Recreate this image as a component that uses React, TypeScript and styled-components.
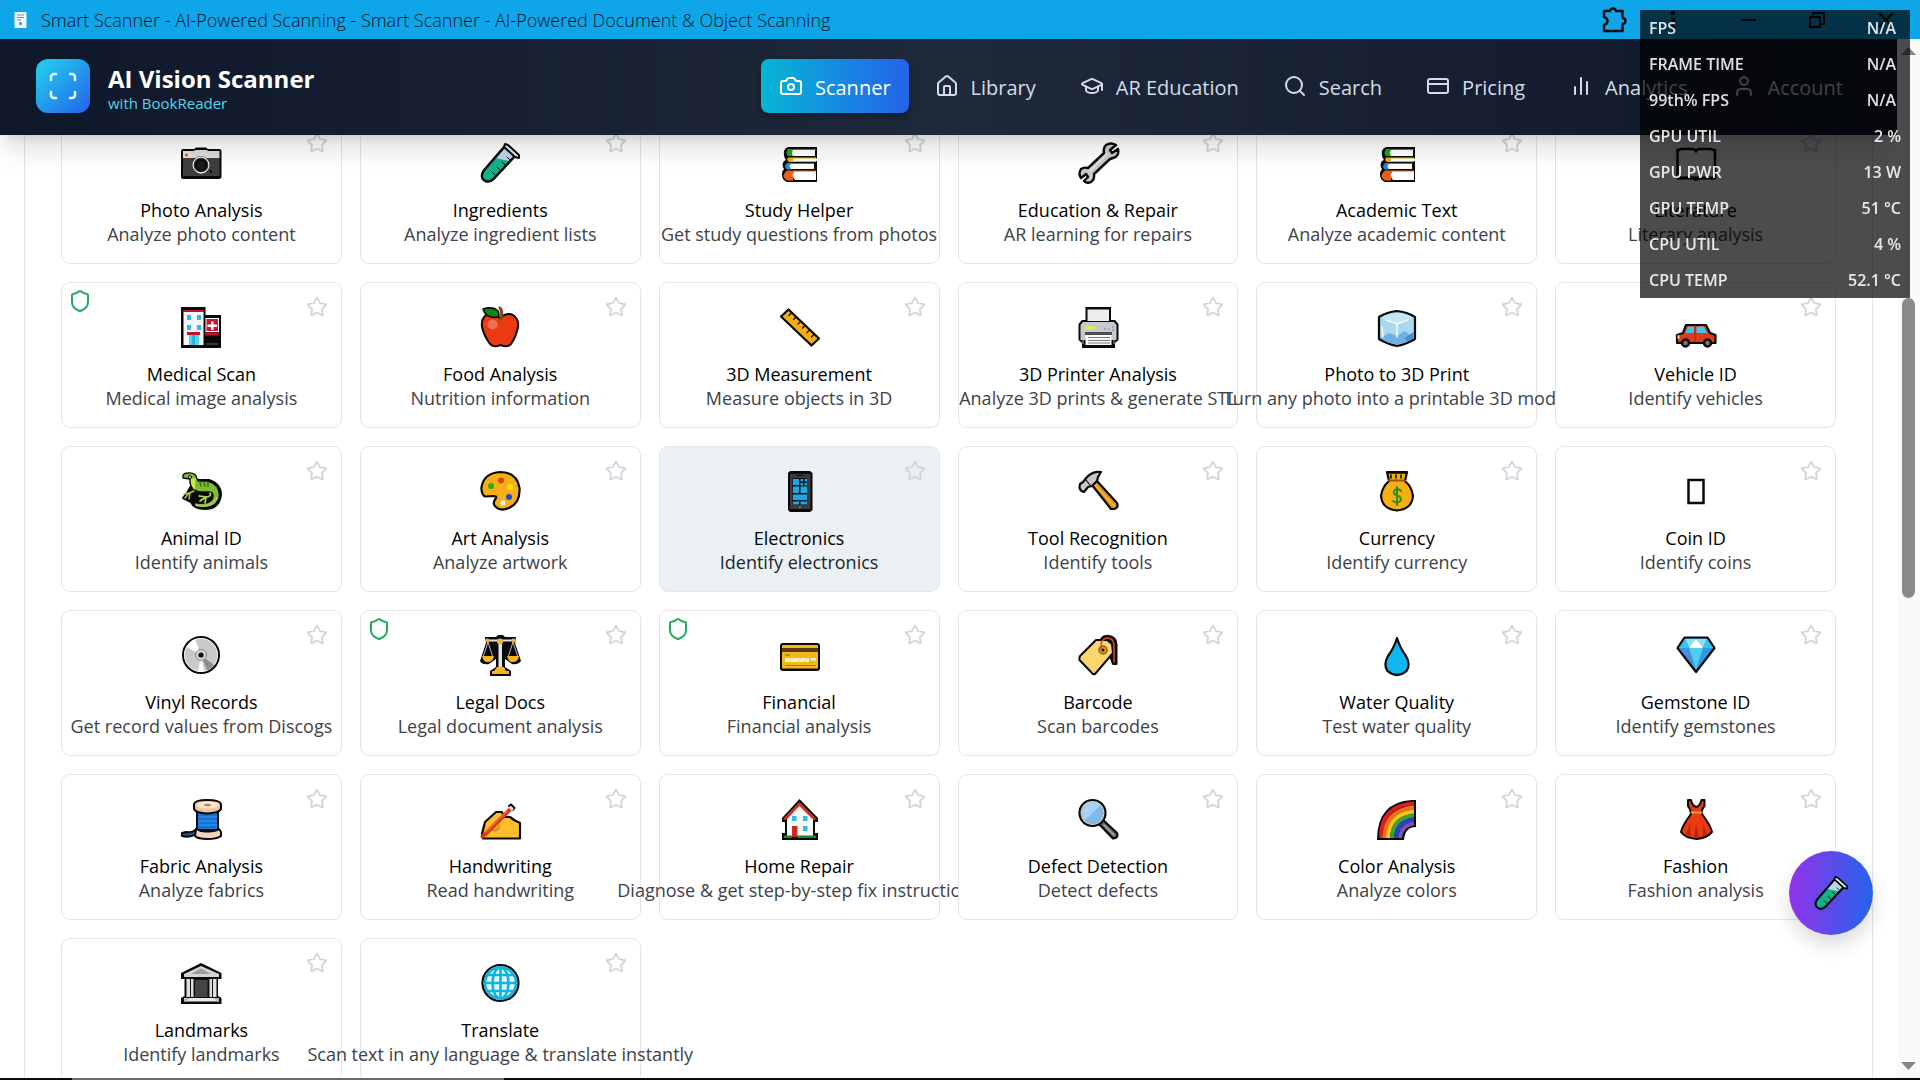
import React from 'react';
import styled, { createGlobalStyle } from 'styled-components';
import { Camera, House, GraduationCap, Search, CreditCard, User, Star, Shield } from 'lucide-react';

const Global = createGlobalStyle`
  *, *::before, *::after { box-sizing: border-box; }
  body { margin: 0; background: #fff; font-family: 'Segoe UI', 'Open Sans', 'Noto Sans', sans-serif; font-size: 18px; color: #000; }
  button { font: inherit; color: inherit; background: none; border: 0; padding: 0; cursor: pointer; }
  h1, p, h2, dl, dt, dd { margin: 0; }
`;

/* ---------- pictograms ---------- */

const K = { stroke: '#0a0a0a', strokeWidth: 2, strokeLinejoin: 'round', strokeLinecap: 'round' } as const;

const TestTube = () => (
  <g {...K}>
    <path d="M25 4 L3.500 29 Q0 35 4 38 Q8 41.500 13.500 37 L35 14 Z" fill="#b9d8e8" />
    <path d="M15 16 L3.500 29 Q0 35 4 38 Q8 41.500 13.500 37 L29 19 Z" fill="#0fb38a" stroke="none" />
    <path d="M25 4 L3.500 29 Q0 35 4 38 Q8 41.500 13.500 37 L35 14" fill="none" strokeWidth="2.400" />
    <path d="M25 2 L28 3 L39 13 L39 16 L35 15 L24 5 Z" fill="#d4ebf5" />
    <path d="M27 15 l3 3 M22 20 l3 3 M17 25 l3 3 M12 30 l3 3" strokeWidth="1" />
  </g>
);

const Books = () => (
  <g>
    <path d="M9 5 H38 V40 H8 Q3 38 3 33 Q3 29 5 27 Q2 23 5 19 L7 18 Q4 14 5 9 Q6 6 9 5Z" fill="#0a0a0a" />
    <path d="M9 7 H37 V8 H14 V14 H9 Q6 11 9 7Z" fill="#1fa51b" />
    <path d="M14 8 H36 V14 H14 Q12 11 14 8Z" fill="#fff" />
    <path d="M9 15.500 H37 V20 H10 Q7 18 9 15.500Z" fill="#e9b50f" />
    <path d="M14 16.500 H38 V19 H14Z" fill="#fff" />
    <path d="M8 21 H35 V22 H12 V27.500 H8 Q4 25 8 21Z" fill="#2f83d6" />
    <path d="M12 22 H35 V27 H12 Q9 24 12 22Z" fill="#fff" />
    <path d="M8 28.500 H37 V30 H14 V38.500 H8 Q1 34 8 28.500Z" fill="#ee5f16" />
    <path d="M15 29.500 H37 V38 H16 Q12 34 15 29.500Z" fill="#fff" />
  </g>
);

const pictures: Record<string, React.ReactNode> = {
  camera: (
    <g>
      <path d="M2 7 H13 L15 5.500 H25 L27 7 H38 Q40.500 7 40.500 9 V35 Q40.500 37 38 37 H2 Q0 37 0 35 V9 Q0 7 2 7Z" fill="#0a0a0a" />
      <rect x="2" y="16" width="36.500" height="18" fill="#3e3e3e" />
      <path d="M2 9 H12 L15 8 H25 L28 9 H38.500 V16 H2Z" fill="#dcdcdc" />
      <path d="M2 9 h9 v7 h-9z" fill="#f3dcd6" />
      <circle cx="5.500" cy="13" r="1.500" fill="#e04a20" />
      <circle cx="20" cy="23" r="9" fill="#0a0a0a" />
      <circle cx="20" cy="23" r="8" fill="#2a2a2a" stroke="#f2f2f2" strokeWidth="1.300" />
      <circle cx="20" cy="23" r="5" fill="#1c1c1c" stroke="#0a0a0a" strokeWidth="2" />
      <rect x="29" y="28" width="2" height="3" fill="#111" />
    </g>
  ),
  tube: <TestTube />,
  books: <Books />,
  wrench: (
    <g {...K}>
      <path
        d="M28 3 Q33 0 38 3 L32 8 L34 11 L40 7 Q42 14 35 16 L32 17 L16 32 Q17 37 13 40 Q9 42 6 39 L10 35 L8 32 L3 36 Q0 32 3 27 Q6 25 10 26 L26 11 Q25 6 28 3Z"
        fill="#c9c9c9"
        strokeWidth="2.400"
      />
      <path d="M12 29 L29 12" stroke="#e8e8e8" strokeWidth="1.500" />
    </g>
  ),
  openbook: (
    <g fill="#fff" stroke="#0a0a0a" strokeWidth="2.500">
      <path d="M1.500 8 H3 Q4 7 6 7 H16 Q19 7 20 9 Q21 7 24 7 H34 Q36 7 37 8 H39 V36 H23 Q20 39 17 36 H1.500Z" />
      <path d="M1.500 36 H39" strokeWidth="3" />
    </g>
  ),
  hospital: (
    <g>
      <path d="M0 1 H24.500 V9 H40 V42 H0Z" fill="#0a0a0a" />
      <rect x="2.500" y="5" width="20" height="34" fill="#f4f6f7" />
      <rect x="2.500" y="4" width="20" height="2" fill="#c8102e" />
      <path d="M6 9h4v5H6z M16 9h4v5h-4z M6 19h4v5H6z M16 19h4v5h-4z" fill="#25c0e2" />
      <rect x="6" y="26" width="13" height="3" fill="#c8102e" />
      <rect x="8" y="29" width="10" height="10" fill="#58d2ef" />
      <rect x="11" y="29" width="3" height="10" fill="#28b7de" />
      <rect x="24.500" y="12" width="13.500" height="14" fill="#fff" />
      <rect x="25.500" y="13" width="11.500" height="12" fill="#cb1532" />
      <path d="M30 15.500h2.500v3H36v2.500h-3.500v3H30v-3h-3.500v-2.500H30z" fill="#fff" />
      <rect x="24" y="26.500" width="14" height="3" fill="#b81430" />
      <path d="M25 38h12" stroke="#666" />
    </g>
  ),
  apple: (
    <g {...K}>
      <path
        d="M20 12 Q27 6 33 9 Q39 13 38 21 Q36 31 31 38 Q27 42 20.500 39 Q14 42 10 38 Q4 30 2 21 Q1 13 6 9 Q12 6 20 12Z"
        fill="#e93a12"
      />
      <circle cx="12.500" cy="18.500" r="5" fill="#f0705a" stroke="none" />
      <path d="M20 2 q3 4 1 11" stroke="#7a4a24" strokeWidth="3" fill="none" />
      <path d="M3 3 Q13 0 18 5 Q20 9 18 11 Q6 13 3 3Z" fill="#12870f" strokeWidth="1.600" />
    </g>
  ),
  ruler: (
    <g {...K}>
      <path d="M9.500 3.500 L40 32.500 L32.500 39.500 L2 10.500Z" fill="#f5ae14" strokeWidth="2.200" />
      <path d="M12.500 7 l-2.500 2.500 M17 11 l-2.500 2.500 M21.500 15.500 l-2.500 2.500 M26 19.500 l-2.500 2.500 M30.500 24 l-2.500 2.500 M35 28.500 l-2.500 2.500" strokeWidth="1.200" />
    </g>
  ),
  printer: (
    <g>
      <path d="M7.500 1 H33 V14 H37 L40.500 18 V34 L37 37 V42 H4 V37 L0.500 34 V18 L4 14 H7.500Z" fill="#0a0a0a" />
      <path d="M9.500 3.500 H31 V15 H9.500Z" fill="#ededed" />
      <path d="M5 16 H36 L38.500 19 V34 H2.500 V19Z" fill="#c6cacd" />
      <rect x="7.500" y="20" width="9" height="4" fill="#d9e85c" />
      <path d="M26 23h1.500M30 23h1.500M34 21h1.500M34 24h1.500" stroke="#5b7d8c" strokeWidth="1.200" />
      <rect x="7" y="26" width="27" height="3" fill="#4d4d4d" />
      <path d="M7.500 29 H33.500 V39 H7.500Z" fill="#fafafa" />
      <path d="M10 31.500h22M10 34.500h22M10 37h22" stroke="#7a7a7a" strokeWidth="1" />
      <path d="M5 34v4M36 34v4" stroke="#9a9a9a" />
    </g>
  ),
  ice: (
    <g {...K}>
      <path d="M20 5 Q30 6 38 11 V33 Q30 38 20 40 Q10 38 2 33 V11 Q10 6 20 5Z" fill="#a9d8f0" strokeWidth="2.200" />
      <path d="M4 12 Q12 7 20 7 Q29 7 36.500 12 L20 19Z" fill="#c4e6f5" stroke="none" />
      <path d="M3.500 32 L12 27 L20 30 L28 25 L36.500 32 Q30 37 20 38.500 Q10 37 3.500 32Z" fill="#6fb0e4" stroke="none" />
      <path d="M28 32 L36.500 26 V32 L30 35.500Z" fill="#3f8ed8" stroke="none" />
      <path d="M9 14 L20 18 L31 14 M20 18 V31 M5 21 L6 31" stroke="#fff" strokeWidth="1.300" fill="none" />
    </g>
  ),
  car: (
    <g {...K}>
      <path d="M10 19 H30 L34 27 L39.500 29 V37 H1 V29 L7 27Z" fill="#e13a16" strokeWidth="2.200" />
      <path d="M12 20.500 H18 V27 H9.500Z M20.500 20.500 H28 L31 27 H20.500Z" fill="#40c4ea" stroke="none" />
      <path d="M19 19 V36" stroke="#a52608" strokeWidth="1" />
      <circle cx="9.500" cy="37" r="3.500" fill="#777" strokeWidth="2.500" />
      <circle cx="31.500" cy="37" r="3.500" fill="#777" strokeWidth="2.500" />
      <path d="M2.500 30 v2" stroke="#ffd9a0" />
    </g>
  ),
  lizard: (
    <g {...K}>
      <path d="M10 16 Q14 10 16 10 L28 10 Q40 14 40 25 Q38 39 24 39 Q13 39 10 32 L2 28 L6 23Z" fill="#0a0a0a" />
      <path
        d="M2 8 Q1 3 7 3 Q15 2 16 9 L17 11 H27 Q38 14 38.500 25 Q37 37 24 37.500 Q14 37 12 32 Q18 34 25 33 Q32 31 32 26 Q32 22 28 22 L18 22 Q11 20 9 13 V9 Z"
        fill="#82b832"
        strokeWidth="1.400"
      />
      <path d="M10 9 Q9 16 14 20 Q14 12 15 8Z" fill="#c8e84b" stroke="none" />
      <path d="M19 12 l1 4 M23 12 l1 4 M27 12.500 l0 4" stroke="#2c7a26" strokeWidth="1.500" />
      <circle cx="9" cy="7" r="1.500" fill="#fff" strokeWidth="1" />
      <path d="M13 21 Q8 24 3 24 M8 23 L4 28 M9 23 L8 29" stroke="#9cc93f" strokeWidth="1.500" fill="none" />
      <path d="M29 23 Q31 26 26 27 L18 26 M25 27 L19 31 M25 27 L24 33" stroke="#b4dc58" strokeWidth="1.600" fill="none" />
      <path d="M15 35 Q28 39 36 28" stroke="#b9c658" strokeWidth="2" fill="none" />
    </g>
  ),
  palette: (
    <g {...K}>
      <path d="M20 2 Q37 2 39.500 18 Q40.500 33 29 38 Q20 42 15 36 Q12 33 16 28 Q17 26 13 26 L5 26.500 Q1 24 1.500 17 Q4 3 20 2Z" fill="#f6ad16" strokeWidth="2.200" />
      <circle cx="21" cy="10.500" r="3" fill="#e0401a" stroke="none" />
      <circle cx="11" cy="16" r="3" fill="#35a80f" stroke="none" />
      <circle cx="30" cy="17" r="3" fill="#ffde00" stroke="none" />
      <circle cx="29" cy="27" r="3" fill="#1c4bd0" stroke="none" />
      <circle cx="23" cy="33" r="2.600" fill="#fff" stroke="none" />
    </g>
  ),
  phone: (
    <g>
      <path d="M11 1 H31 L33.500 3 V40 L31 42 H11 L9 40 V3Z" fill="#0a0a0a" />
      <rect x="11" y="4" width="20.500" height="35" fill="#3b3b3b" />
      <rect x="13.500" y="8" width="14.500" height="27" fill="#111" />
      <path d="M14 9h6v6h-6z M21.500 9h2.500v2.500h-2.500z M25.500 9h2.500v2.500h-2.500z M21.500 13h2.500v2.500h-2.500z M25.500 13h2.500v2.500h-2.500z M14 16.500h6v6.500h-6z M21.500 16.500h6.500v6.500h-6.500z M14 24.500h14v5.500H14z M14 31.500h6v3h-6z M21.500 31.500h6.500v3h-6.500z" fill="#1fa8e8" />
      <path d="M17 5.500h8" stroke="#111" />
      <circle cx="21" cy="37" r="1" fill="#888" />
    </g>
  ),
  hammer: (
    <g {...K}>
      <path d="M14 15 L19 11 L39 33 Q41 38 36 39 L33 39 Z" fill="#e0971a" strokeWidth="2.200" />
      <path d="M17 15 L36 36" stroke="#f3bb44" strokeWidth="1.400" />
      <path d="M23 2 Q15 1 9 7 L5 12 L2 14 Q0 20 6 22 L10 17 L14 16 L19 11 L20 7 Z" fill="#c4c8cb" strokeWidth="2.200" />
      <path d="M8 10 l4 5" strokeWidth="1.200" />
    </g>
  ),
  money: (
    <g {...K}>
      <path d="M10 2 H30 L28 11 Q35 17 36 26 Q35 39 20 40.500 Q5 39 4 26 Q5 17 12 11Z" fill="#f6b013" strokeWidth="2.200" />
      <path d="M11 3 H29 M14 5v3M19 5v3M24 5v3" strokeWidth="1.600" />
      <path d="M12 10.500 H28" stroke="#a0500f" strokeWidth="2" />
      <path d="M24 21 Q20 17 17 21 Q16 24 20 25.500 Q25 27 23.500 31 Q20 34 16 31 M20 17 V35" stroke="#2f8f12" strokeWidth="2" fill="none" />
    </g>
  ),
  blank: <rect x="12.500" y="10" width="15" height="23" fill="none" stroke="#0a0a0a" strokeWidth="2.500" />,
  disc: (
    <g {...K}>
      <circle cx="20" cy="21" r="18" fill="#c9c9c9" strokeWidth="2" />
      <circle cx="20" cy="21" r="16.500" fill="none" stroke="#efefef" strokeWidth="1" />
      <path d="M20 21 L6 13 Q9 7 14 5Z" fill="#fff" stroke="none" />
      <path d="M20 21 L23 37 Q18 38 17 37Z" fill="#fff" stroke="none" />
      <path d="M20 21 L33 31 Q29 36 26 36Z" fill="#8c8c8c" stroke="none" />
      <circle cx="20" cy="21" r="5.500" fill="#d5d5d5" stroke="#888" strokeWidth="1" />
      <circle cx="20" cy="21" r="2.600" fill="#0a0a0a" stroke="none" />
    </g>
  ),
  scales: (
    <g>
      <path d="M5 3 H16 L18 1 H23 L25 3 H36 L35 9 L41 27 Q38 31 32 30 L25 25 V33 L31 37 V42 H10 V37 L16 33 V25 L9 30 Q2 31 0 27 L6 9Z" fill="#0a0a0a" />
      <path d="M7 6.500 H34" stroke="#e0e0e0" strokeWidth="2" />
      <path d="M18.500 5h3.500v28h-3.500z" fill="#dfe3e6" />
      <path d="M8 8 L3.500 22 M8 8 L12.500 22 M33 8 L28.500 22 M33 8 L37.500 22" stroke="#b7b7b7" strokeWidth="1" />
      <path d="M2 22h12q-1 6-6 6t-6-6z M27 22h12q-1 6-6 6t-6-6z M12 37h17v3H12z M17 33h7l2 4H14z" fill="#f5b221" />
      <circle cx="20" cy="7.500" r="3" fill="#f5b221" />
      <circle cx="7.500" cy="6.500" r="2" fill="#f5b221" />
      <circle cx="33.500" cy="6.500" r="2" fill="#f5b221" />
    </g>
  ),
  card: (
    <g>
      <rect x="1" y="9" width="40" height="28" rx="3" fill="#0a0a0a" />
      <rect x="3" y="11" width="36" height="23.500" rx="1" fill="#f2b91c" />
      <rect x="3" y="14" width="36" height="4" fill="#5b3a1c" />
      <path d="M6 21h5" stroke="#7d5a10" />
      <path d="M6 24h24v4H6z M31.500 24H37v2.500h-5.500z" fill="#fdf1c6" />
      <path d="M10 28l4-4M18 28l4-4M25 28l4-4" stroke="#f0d273" />
      <path d="M6 31.500h31" stroke="#a87a0c" />
    </g>
  ),
  tag: (
    <g {...K}>
      <path d="M22 8 Q24 1 31 2 Q38 3 38.500 10 V30 H35 L32 22" fill="#0a0a0a" />
      <path d="M18 6 L29 6 L34 10 L35 19 L17 40 Q15 41 13 38 L1.500 26 Q1 24 2 22Z" fill="#fbd56f" strokeWidth="2" />
      <circle cx="25" cy="16" r="4" fill="#d99b28" stroke="#9a5c12" strokeWidth="1.500" />
      <circle cx="25" cy="16" r="1.500" fill="#0a0a0a" stroke="none" />
      <path d="M23 15 Q22 5 29 4 Q36 4 36 12 V28" stroke="#d3542a" strokeWidth="1.500" fill="none" />
    </g>
  ),
  drop: <path {...K} strokeWidth={2.2} d="M20 4 Q23 14 29 22 Q34 31 29.500 37 Q20 45 10.500 37 Q6 31 11 22 Q17 14 20 4Z" fill="#0fb6ef" />,
  gem: (
    <g {...K}>
      <path d="M8.500 3.500 H31.500 L38.500 14 L20 38 L1.500 14Z" fill="#2e9be0" strokeWidth="2.200" />
      <path d="M9 5 H31 L26.500 14 H13.500Z" fill="#8fe0f7" stroke="none" />
      <path d="M20 5 L27 14 H13Z" fill="#fff" stroke="none" />
      <path d="M3 14 H13 L9 5Z M37 14 H27 L31 5Z" fill="#3cc3ef" stroke="none" />
      <path d="M13 14 H27 L20 35Z" fill="#52cdf2" stroke="none" />
      <path d="M3.500 15 H12 L18 32Z" fill="#4a8fd8" stroke="none" />
    </g>
  ),
  thread: (
    <g {...K}>
      <path d="M16 30 Q13 35 5 34 L1 35 V38 Q9 40 15 36Z" fill="#155a9c" />
      <path d="M16 12 H37 V32 H16Z" fill="#1173cf" />
      <path d="M18 19 H36 M18 23 H36 M18 27 H36" stroke="#3e9af0" strokeWidth="1.200" />
      <path d="M13 6 Q14 2 26 2 Q39 2 40 6 V11 Q38 15 26 15.500 Q15 15 13 11Z" fill="#e9c7a2" />
      <ellipse cx="26.500" cy="7" rx="11" ry="3.500" fill="#fbe6d4" stroke="none" />
      <ellipse cx="26.500" cy="7" rx="3.500" ry="1.300" fill="#b98554" stroke="none" />
      <path d="M15 31 Q20 34 26 33.500 Q34 34 38 31 L40 34 V38 Q36 41 26.500 41 Q17 41 14 38Z" fill="#f2d6ba" />
    </g>
  ),
  writing: (
    <g {...K}>
      <path d="M16 14 L22 14 L24 19 H30 L34 22 L40 25 V40.500 H3 L2 36 L5 24Z" fill="#fbbf2d" strokeWidth="2.200" />
      <path d="M12 32 Q17 34 19 30 L19 27" stroke="#c98a12" strokeWidth="1.500" fill="#e4a21c" />
      <path d="M29 8 L31 6.500 L34.500 10 L33 12Z" fill="#ffd8cf" strokeWidth="2" />
      <path d="M31 10.500 L5.500 36 L2.500 38.500" stroke="#d93a1a" strokeWidth="4" fill="none" />
      <path d="M27 13 L6 34" stroke="#ef6a45" strokeWidth="1.200" />
      <path d="M30.500 9.500 L32 11" stroke="#ffd8cf" strokeWidth="3" />
    </g>
  ),
  house: (
    <g>
      <path d="M20.500 1 L39 20 V24 H36 V35 H39 V42 H3 V35 H6 V24 H3 V20Z" fill="#0a0a0a" />
      <path d="M20.500 7 L34 21 V38 H8 V21Z" fill="#f8f8f6" />
      <path d="M20.500 4 L37 20.500 L35 22.500 L20.500 8 L6 22.500 L4.500 20.500Z" fill="#d2361f" />
      <path d="M13 18h4.500v5H13z M24 18h4.500v5H24z M24 28h4.500v5H24z" fill="#35bce6" />
      <rect x="13" y="28" width="5.500" height="11" fill="#c92a1e" />
      <path d="M5 37.500h8v2.500H5z M18.500 37.500H37v2.500H18.500z" fill="#1b8a2c" />
    </g>
  ),
  magnifier: (
    <g {...K}>
      <path d="M20 25 L25 22 L39 35 Q41 40 35 40.500Z" fill="#5f676c" strokeWidth="2.200" />
      <path d="M26 27 L36 37" stroke="#a5adb1" strokeWidth="1.500" />
      <circle cx="14.500" cy="15" r="13" fill="#cfd8dc" strokeWidth="2.200" />
      <circle cx="14.500" cy="15" r="10.500" fill="#7ebbec" stroke="#9aa7ae" strokeWidth="1" />
      <path d="M7 22 A10 10 0 0 1 22 7.500Z" fill="#a7d4f5" stroke="none" />
    </g>
  ),
  rainbow: (
    <g fill="none" strokeWidth="4">
      <path d="M0 42 Q0 4 35 2 H39 V29 Q28 29 27 42Z" fill="#0a0a0a" stroke="none" />
      <path d="M4 40 Q4 7 37 5.500" stroke="#d81e1e" />
      <path d="M7.500 40 Q8 12 37 9.500" stroke="#f0701a" />
      <path d="M11 40 Q12 16 37 13.500" stroke="#f5c518" />
      <path d="M15 40 Q16 20 37 17.500" stroke="#3aa52b" />
      <path d="M19 40 Q20 23 37 21.500" stroke="#2340d8" />
      <path d="M23 40 Q24 27 37 25.500" stroke="#7a52a5" />
    </g>
  ),
  dress: (
    <g {...K}>
      <path d="M12 2 H15 Q16 8 20.500 9 Q24 8 25.500 2 H28.500 V8 Q25 12 26 16 Q35 28 36 34 Q31 40 20.500 41 Q9 40 5 34 Q6 28 15 16 Q15 12 12 8Z" fill="#ea3a12" strokeWidth="2" />
      <path d="M15.500 14.500 H25.500" stroke="#f7a43c" strokeWidth="2" />
      <path d="M14 26 L10 36 L15 38Z M20 26 L18 39 H23Z M27 26 L27 38 L31 36Z" fill="#b8230a" stroke="none" />
    </g>
  ),
  bank: (
    <g>
      <path d="M20 1 L40.500 11 V17 H37 V34 L40.500 36 V42 H0 V36 L3.500 34 V17 H0 V11Z" fill="#0a0a0a" />
      <path d="M20 4 L38 12 V15 H3 V12Z" fill="#d4d4d4" />
      <path d="M20 6.500 L30 12 H10Z" fill="#9c9c9c" />
      <rect x="5.500" y="17" width="30" height="18" fill="#111" />
      <path d="M5.500 17h3.500v18H5.500z M10 17h2.500v18H10z M28.500 17H31v18h-2.500z M32 17h3.500v18H32z" fill="#dedede" />
      <rect x="14" y="18" width="12.500" height="17" fill="#454545" />
      <path d="M3 36H38V39.500H3z" fill="#e9e9e9" />
      <path d="M3 36l6 0-4 3.500H3zM38 36h-6l4 3.500h2z" fill="#bcbcbc" />
    </g>
  ),
  globe: (
    <g {...K}>
      <circle cx="20.500" cy="21" r="18" fill="#e2fbff" strokeWidth="2.200" />
      <g stroke="#12b3dc" strokeWidth="2.600" fill="none">
        <circle cx="20.500" cy="21" r="15.500" />
        <ellipse cx="20.500" cy="21" rx="8" ry="15.500" />
        <path d="M20.500 5.500V36.500M5 21H36M8 13H33M8 29H33" />
      </g>
    </g>
  ),
};

/* ---------- title bar ---------- */

const Frame = styled.div`
  display: flex;
  flex-direction: column;
  height: 100vh;
  overflow: hidden;
`;

const TitleBar = styled.div`
  display: flex;
  align-items: center;
  flex: 0 0 39px;
  background: #0ea5e9;
  color: #07142a;
`;

const TitleText = styled.p`
  flex: 1;
  margin-left: 14px;
  font-weight: 300;
  font-size: 18px;
  line-height: 24px;
  white-space: nowrap;
`;

const Favicon = styled.svg`
  margin-left: 14px;
`;

const WindowButton = styled.button<{ $width: number }>`
  display: flex;
  align-items: center;
  justify-content: center;
  width: ${(p) => p.$width}px;
  height: 39px;
`;

const BrowserTools = styled.div`
  display: flex;
  margin-right: 11px;
`;

/* ---------- body ---------- */

const Body = styled.div`
  display: flex;
  flex: 1;
  min-height: 0;
`;

const Viewport = styled.div`
  position: relative;
  flex: 1;
  min-width: 0;
  overflow: hidden;
`;

const Header = styled.header`
  position: relative;
  z-index: 10;
  display: flex;
  align-items: center;
  justify-content: space-between;
  height: 96px;
  padding: 0 36px 2px;
  background: linear-gradient(to right, #0f172a, #1e293b 50%, #0f172a);
  box-shadow: 0 20px 25px -5px rgba(0, 0, 0, 0.12), 0 8px 10px -6px rgba(0, 0, 0, 0.12);
`;

const Brand = styled.div`
  display: flex;
  align-items: flex-end;
  gap: 18px;
`;

const LogoTile = styled.div`
  display: flex;
  align-items: center;
  justify-content: center;
  width: 54px;
  height: 54px;
  border-radius: 12px;
  background: linear-gradient(to bottom right, #22d3ee, #2563eb);
`;

const BrandName = styled.h1`
  color: #fff;
  font-size: 24px;
  font-weight: 700;
  line-height: 28px;
`;

const BrandSub = styled.p`
  color: #4fd8ea;
  font-size: 15px;
  line-height: 20px;
`;

const Nav = styled.nav`
  display: flex;
  gap: 8px;
`;

const NavLink = styled.a<{ $active?: boolean }>`
  display: flex;
  align-items: center;
  gap: 12px;
  height: 54px;
  padding: 0 18px;
  border-radius: 8px;
  color: ${(p) => (p.$active ? '#fff' : '#d5dce6')};
  background: ${(p) => (p.$active ? 'linear-gradient(to right, #06b6d4, #2563eb)' : 'none')};
  box-shadow: ${(p) => (p.$active ? '0 4px 6px rgba(0, 0, 0, 0.25)' : 'none')};
  font-size: 20px;
  line-height: 28px;
  text-decoration: none;
  white-space: nowrap;
`;

const NavLabel = styled.span`
  padding-top: 4px;
`;

const Page = styled.main`
  margin-top: -54px;
  padding: 0 24px;
`;

const Panel = styled.section`
  padding: 36px 36px 54px;
  border: 1px solid #e4e4e7;
`;

const Grid = styled.div`
  display: grid;
  grid-template-columns: repeat(6, minmax(0, 1fr));
  gap: 18px;
`;

const Tile = styled.article<{ $hot?: boolean }>`
  position: relative;
  border: 1px solid ${(p) => (p.$hot ? '#e0e7ec' : '#e5e5e7')};
  border-radius: 9px;
  background: ${(p) => (p.$hot ? '#eaf0f4' : '#fff')};
`;

const TileButton = styled.button`
  display: flex;
  flex-direction: column;
  align-items: center;
  width: 100%;
  padding: 23px 0 17px;
`;

const Picture = styled.svg`
  flex: none;
  margin-bottom: 14px;
  overflow: visible;
`;

const TileTitle = styled.span`
  line-height: 24px;
  white-space: nowrap;
`;

const TileText = styled.span<{ $hot?: boolean }>`
  color: ${(p) => (p.$hot ? '#20242c' : '#404247')};
  line-height: 24px;
  white-space: nowrap;
`;

const StarButton = styled.button`
  position: absolute;
  top: 9px;
  right: 9px;
  display: flex;
  padding: 4px;
  color: #d1d5db;
`;

const SafeBadge = styled.span`
  position: absolute;
  top: 6px;
  left: 6px;
  display: flex;
  color: #22a85f;
`;

const Fab = styled.button`
  position: absolute;
  right: 24px;
  bottom: 143px;
  display: flex;
  align-items: center;
  justify-content: center;
  width: 84px;
  height: 84px;
  border-radius: 50%;
  background: linear-gradient(to right, #9333ea, #2563eb);
  box-shadow: 0 10px 20px rgba(0, 0, 0, 0.14);
`;

/* ---------- scroll bar ---------- */

const Track = styled.div`
  display: flex;
  flex-direction: column;
  align-items: center;
  flex: 0 0 23px;
  padding: 8px 0;
  background: #fafafa;
`;

const Gap = styled.div<{ $grow: number }>`
  flex: ${(p) => p.$grow} 0 0;
`;

const Thumb = styled.div`
  flex: 300 0 0;
  width: 13px;
  border-radius: 7px;
  background: #8a8a8a;
`;

const TaskStrip = styled.footer`
  display: flex;
  flex: 0 0 2px;
  padding-left: 72px;
  background: #0c0a0d;
`;

const TaskMark = styled.span`
  width: 432px;
  background: #6b6b6b;
`;

/* ---------- metrics overlay ---------- */

const Overlay = styled.dl`
  position: fixed;
  top: 10px;
  right: 10px;
  z-index: 30;
  width: 270px;
  background: rgba(0, 0, 0, 0.7);
  color: rgba(255, 255, 255, 0.87);
  font-size: 16px;
  font-weight: 600;
`;

const Metric = styled.div`
  display: flex;
  justify-content: space-between;
  padding: 0 9px;
  line-height: 36px;
`;

const MetricValue = styled.dd<{ $blank: boolean }>`
  padding-right: ${(p) => (p.$blank ? 5 : 0)}px;
`;

const BarsIcon = () => (
  <svg width="24" height="24" viewBox="0 0 24 24" fill="none" stroke="currentColor" strokeWidth="2" strokeLinecap="round" aria-hidden="true">
    <path d="M18 20V8M12 20V4M6 20v-7" />
  </svg>
);

const navItems = [
  { label: 'Scanner', icon: <Camera size={24} strokeWidth={2} />, active: true },
  { label: 'Library', icon: <House size={24} strokeWidth={2} /> },
  { label: 'AR Education', icon: <GraduationCap size={24} strokeWidth={2} /> },
  { label: 'Search', icon: <Search size={24} strokeWidth={2} /> },
  { label: 'Pricing', icon: <CreditCard size={24} strokeWidth={2} /> },
  { label: 'Analytics', icon: <BarsIcon /> },
  { label: 'Account', icon: <User size={24} strokeWidth={2} /> },
];

type Mode = [picture: string, title: string, text: string, flag?: 'safe' | 'hot'];

const modes: Mode[] = [
  ['camera', 'Photo Analysis', 'Analyze photo content'],
  ['tube', 'Ingredients', 'Analyze ingredient lists'],
  ['books', 'Study Helper', 'Get study questions from photos'],
  ['wrench', 'Education & Repair', 'AR learning for repairs'],
  ['books', 'Academic Text', 'Analyze academic content'],
  ['openbook', 'Literature', 'Literary analysis'],
  ['hospital', 'Medical Scan', 'Medical image analysis', 'safe'],
  ['apple', 'Food Analysis', 'Nutrition information'],
  ['ruler', '3D Measurement', 'Measure objects in 3D'],
  ['printer', '3D Printer Analysis', 'Analyze 3D prints & generate STL'],
  ['ice', 'Photo to 3D Print', 'Turn any photo into a printable 3D model'],
  ['car', 'Vehicle ID', 'Identify vehicles'],
  ['lizard', 'Animal ID', 'Identify animals'],
  ['palette', 'Art Analysis', 'Analyze artwork'],
  ['phone', 'Electronics', 'Identify electronics', 'hot'],
  ['hammer', 'Tool Recognition', 'Identify tools'],
  ['money', 'Currency', 'Identify currency'],
  ['blank', 'Coin ID', 'Identify coins'],
  ['disc', 'Vinyl Records', 'Get record values from Discogs'],
  ['scales', 'Legal Docs', 'Legal document analysis', 'safe'],
  ['card', 'Financial', 'Financial analysis', 'safe'],
  ['tag', 'Barcode', 'Scan barcodes'],
  ['drop', 'Water Quality', 'Test water quality'],
  ['gem', 'Gemstone ID', 'Identify gemstones'],
  ['thread', 'Fabric Analysis', 'Analyze fabrics'],
  ['writing', 'Handwriting', 'Read handwriting'],
  ['house', 'Home Repair', 'Diagnose & get step-by-step fix instructions'],
  ['magnifier', 'Defect Detection', 'Detect defects'],
  ['rainbow', 'Color Analysis', 'Analyze colors'],
  ['dress', 'Fashion', 'Fashion analysis'],
  ['bank', 'Landmarks', 'Identify landmarks'],
  ['globe', 'Translate', 'Scan text in any language & translate instantly'],
];

const metrics: [string, string][] = [
  ['FPS', 'N/A'],
  ['FRAME TIME', 'N/A'],
  ['99th% FPS', 'N/A'],
  ['GPU UTIL', '2 %'],
  ['GPU PWR', '13 W'],
  ['GPU TEMP', '51 °C'],
  ['CPU UTIL', '4 %'],
  ['CPU TEMP', '52.1 °C'],
];

const line = { fill: 'none', stroke: '#0a0a0a', strokeWidth: 2 } as const;

export default function App() {
  return (
    <>
      <Global />
      <Frame>
        <TitleBar>
          <Favicon width="13" height="16" viewBox="0 0 13 16" aria-hidden="true">
            <rect x="0.500" width="12" height="16" rx="1" fill="#eef8fd" />
            <path d="M3 3h7M3 5.500h7M3 8h4" stroke="#5a9fc4" />
            <circle cx="6.500" cy="11.500" r="1.500" fill="#3a86b5" />
          </Favicon>
          <TitleText>
            Smart Scanner - AI-Powered Scanning - Smart Scanner - AI-Powered Document &amp; Object Scanning
          </TitleText>
          <BrowserTools>
            <WindowButton $width={59} aria-label="Extensions">
              <svg width="26" height="26" viewBox="0 0 26 26" {...line} strokeWidth="2.400" strokeLinejoin="round">
                <path d="M3 4 H9 Q9.500 1.500 12 1.500 Q14.500 1.500 15 4 H21.500 V11 Q24.500 11.500 24.500 14 Q24.500 16.500 21.500 17 V24 H3 V18 Q6.500 17 6.500 14 Q6.500 11 3 10Z" />
              </svg>
            </WindowButton>
            <WindowButton $width={59} aria-label="More">
              <svg width="6" height="24" viewBox="0 0 6 24">
                <circle cx="3" cy="5" r="2.200" />
                <circle cx="3" cy="12" r="2.200" />
                <circle cx="3" cy="19" r="2.200" />
              </svg>
            </WindowButton>
          </BrowserTools>
          <WindowButton $width={69} aria-label="Minimize">
            <svg width="16" height="16" viewBox="0 0 16 16" {...line}>
              <path d="M1 8H16" />
            </svg>
          </WindowButton>
          <WindowButton $width={69} aria-label="Restore">
            <svg width="16" height="16" viewBox="0 0 16 16" {...line}>
              <path d="M1 5H11V15H1Z M4 4V1H15V12H12" />
            </svg>
          </WindowButton>
          <WindowButton $width={69} aria-label="Close">
            <svg width="16" height="16" viewBox="0 0 16 16" {...line}>
              <path d="M1 1L15 15M15 1L1 15" />
            </svg>
          </WindowButton>
        </TitleBar>

        <Body>
          <Viewport>
            <Header>
              <Brand>
                <LogoTile>
                  <svg width="28" height="28" viewBox="0 0 28 28" fill="none" stroke="#e8fbff" strokeWidth="2.500" strokeLinecap="round" aria-hidden="true">
                    <path d="M2 8V5a3 3 0 0 1 3-3h2M21 2h2a3 3 0 0 1 3 3v3M26 20v3a3 3 0 0 1-3 3h-2M7 26H5a3 3 0 0 1-3-3v-3" />
                  </svg>
                </LogoTile>
                <div>
                  <BrandName>AI Vision Scanner</BrandName>
                  <BrandSub>with BookReader</BrandSub>
                </div>
              </Brand>
              <Nav>
                {navItems.map((item) => (
                  <NavLink key={item.label} href="#" $active={item.active}>
                    {item.icon}
                    <NavLabel>{item.label}</NavLabel>
                  </NavLink>
                ))}
              </Nav>
            </Header>

            <Page>
              <Panel>
                <Grid>
                  {modes.map(([picture, title, text, flag]) => (
                    <Tile key={title} $hot={flag === 'hot'}>
                      <TileButton>
                        <Picture width="40" height="42" viewBox="0 0 40 42" aria-hidden="true">
                          {pictures[picture]}
                        </Picture>
                        <TileTitle>{title}</TileTitle>
                        <TileText $hot={flag === 'hot'}>{text}</TileText>
                      </TileButton>
                      {flag === 'safe' && (
                        <SafeBadge>
                          <Shield size={24} strokeWidth={2} />
                        </SafeBadge>
                      )}
                      <StarButton aria-label={`Add ${title} to favorites`}>
                        <Star size={22} strokeWidth={2} />
                      </StarButton>
                    </Tile>
                  ))}
                </Grid>
              </Panel>
            </Page>

            <Fab aria-label="Open lab">
              <svg width="34" height="36" viewBox="0 0 40 42" aria-hidden="true">
                <TestTube />
              </svg>
            </Fab>
          </Viewport>

          <Track>
            <svg width="15" height="8" viewBox="0 0 15 8">
              <path d="M0 8L7.500 0L15 8Z" fill="#858585" />
            </svg>
            <Gap $grow={243} />
            <Thumb />
            <Gap $grow={464} />
            <svg width="15" height="8" viewBox="0 0 15 8">
              <path d="M0 0L7.500 8L15 0Z" fill="#858585" />
            </svg>
          </Track>
        </Body>

        <TaskStrip>
          <TaskMark />
        </TaskStrip>
      </Frame>

      <Overlay>
        {metrics.map(([name, value]) => (
          <Metric key={name}>
            <dt>{name}</dt>
            <MetricValue $blank={value === 'N/A'}>{value}</MetricValue>
          </Metric>
        ))}
      </Overlay>
    </>
  );
}
